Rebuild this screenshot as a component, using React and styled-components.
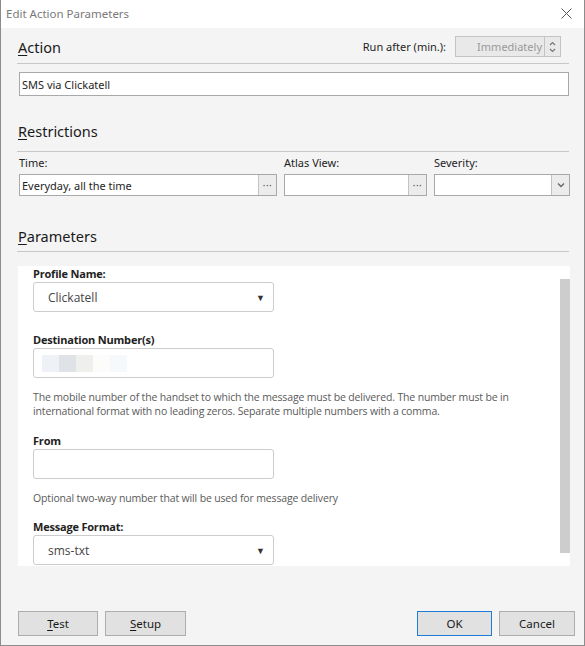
import styled, { createGlobalStyle } from 'styled-components'

const Global = createGlobalStyle`
  html, body { margin: 0; padding: 0; background: #fff; }
  * { box-sizing: border-box; }
`

const Dialog = styled.div`
  width: 585px;
  height: 646px;
  display: flex;
  flex-direction: column;
  background: #f4f4f4;
  border: 1px solid #8c8c8c;
  border-top: none;
  font-family: "Noto Sans", "Open Sans", sans-serif;
  color: #1e1e1e;
`

const TitleBar = styled.div`
  height: 28px;
  flex: none;
  display: flex;
  align-items: center;
  justify-content: space-between;
  padding: 0 8px 2px 5px;
  background: #fff;
  font-size: 11.5px;
  color: #7a7a7a;
`

const CloseBtn = styled.span`
  display: flex;
  width: 20px;
  justify-content: center;
`

const Body = styled.div`
  flex: 1;
  display: flex;
  flex-direction: column;
  padding: 0 15px 0 16px;
`

const SectionHead = styled.div`
  display: flex;
  align-items: center;
  justify-content: space-between;
  height: ${p => p.$h}px;
  margin-top: ${p => p.$top}px;
  border-bottom: 1px solid #c8c8c8;
  padding: 0 8px ${p => p.$pb}px 1px;
`

const SectionTitle = styled.div`
  font-size: 14.5px;
  color: #1a1a1a;
  u { text-decoration-thickness: 1px; text-underline-offset: 2px; }
`

const RunAfter = styled.div`
  display: flex;
  align-items: center;
  gap: 9px;
  font-size: 11px;
`

const Spin = styled.div`
  display: flex;
  width: 106px;
  height: 21px;
  border: 1px solid #c3c3c3;
  background: #e9e9e9;
`

const SpinValue = styled.div`
  flex: 1;
  display: flex;
  align-items: center;
  justify-content: flex-end;
  padding-right: 2px;
  font-size: 11px;
  color: #9a9a9a;
`

const SpinArrows = styled.div`
  width: 16px;
  border-left: 1px solid #c3c3c3;
  display: flex;
  align-items: center;
  justify-content: center;
`

const TextBox = styled.div`
  height: ${p => p.$h || 24}px;
  margin: ${p => p.$m || '0'};
  border: 1px solid #a9a9a9;
  background: #fff;
  display: flex;
  align-items: center;
  font-size: 11px;
`

const BoxText = styled.span`
  flex: 1;
  padding-left: 2px;
  white-space: nowrap;
`

const SideBtn = styled.div`
  width: 18px;
  align-self: stretch;
  border-left: 1px solid #c3c3c3;
  background: #ececec;
  display: flex;
  align-items: center;
  justify-content: center;
  font-size: 10px;
  color: #555;
  letter-spacing: 0.5px;
`

const FilterRow = styled.div`
  display: grid;
  grid-template-columns: 258px 143px 136px;
  column-gap: 7px;
  margin: 2px 0 0 2px;
`

const FilterLabel = styled.div`
  font-size: 11px;
  height: 17px;
  display: flex;
  align-items: center;
  margin-bottom: 3px;
`

const Panel = styled.div`
  margin: 14px 0 0 1px;
  height: 300px;
  width: 552px;
  background: #fff;
  display: flex;
`

const PanelForm = styled.div`
  flex: 1;
  padding: 0 0 0 15px;
  font-family: "Open Sans", "Noto Sans", sans-serif;
`

const ScrollTrack = styled.div`
  width: 10px;
  padding-top: 13px;
  padding-bottom: 13px;
  display: flex;
`

const ScrollThumb = styled.div`
  flex: 1;
  background: #cdcdcd;
`

const FieldLabel = styled.div`
  font-size: 11px;
  font-weight: 700;
  color: #222;
  margin-top: ${p => p.$top || 0}px;
  height: 15px;
  line-height: 15px;
  letter-spacing: -0.2px;
`

const WebInput = styled.div`
  width: 241px;
  height: 30px;
  margin-top: 1px;
  border: 1px solid #cccccc;
  border-radius: 3px;
  display: flex;
  align-items: center;
  padding: 0 8px 0 14px;
  font-size: 12px;
  color: #444;
`

const Caret = styled.span`
  margin-left: auto;
  font-size: 9px;
  color: #333;
`

const Blur = styled.div`
  display: flex;
  margin-left: -6px;
  height: 17px;
  span { width: 17px; height: 17px; filter: blur(0.4px); }
`

const Help = styled.div`
  margin-top: 12px;
  font-size: 10.5px;
  line-height: 14px;
  color: #5a5a5a;
  letter-spacing: -0.15px;
`

const Footer = styled.div`
  margin: auto -6px 9px 0;
  display: flex;
  gap: 7px;
  padding-left: 1px;
`

const Button = styled.div`
  width: ${p => p.$w || 80}px;
  height: 25px;
  border: 1px solid ${p => (p.$default ? '#1f7bd6' : '#adadad')};
  background: #e1e1e1;
  display: flex;
  align-items: center;
  justify-content: center;
  font-size: 11.5px;
  color: #1a1a1a;
  margin-left: ${p => (p.$push ? 'auto' : '0')};
  u { text-underline-offset: 2px; }
`

export default function App() {
  return (
    <>
      <Global />
      <Dialog>
        <TitleBar>
          <span>Edit Action Parameters</span>
          <CloseBtn>
            <svg width="11" height="11" viewBox="0 0 11 11">
              <path d="M0.5 0.5 L10.5 10.5 M10.5 0.5 L0.5 10.5" stroke="#555" strokeWidth="1" />
            </svg>
          </CloseBtn>
        </TitleBar>
        <Body>
          <SectionHead $top={6} $h={30} $pb={4}>
            <SectionTitle><u>A</u>ction</SectionTitle>
            <RunAfter>
              <span>Run after (min.):</span>
              <Spin>
                <SpinValue>Immediately</SpinValue>
                <SpinArrows>
                  <svg width="7" height="12" viewBox="0 0 7 12">
                    <path d="M1 4 L3.5 1.5 L6 4 M1 8 L3.5 10.5 L6 8" stroke="#777" strokeWidth="1.2" fill="none" />
                  </svg>
                </SpinArrows>
              </Spin>
            </RunAfter>
          </SectionHead>
          <TextBox $m="8px 0 0 2px">
            <BoxText>SMS via Clickatell</BoxText>
          </TextBox>

          <SectionHead $top={23} $h={33} $pb={8}>
            <SectionTitle><u>R</u>estrictions</SectionTitle>
          </SectionHead>
          <FilterRow>
            <div>
              <FilterLabel>Time:</FilterLabel>
              <TextBox $h={22}>
                <BoxText>Everyday, all the time</BoxText>
                <SideBtn>···</SideBtn>
              </TextBox>
            </div>
            <div>
              <FilterLabel>Atlas View:</FilterLabel>
              <TextBox $h={22}>
                <BoxText />
                <SideBtn>···</SideBtn>
              </TextBox>
            </div>
            <div>
              <FilterLabel>Severity:</FilterLabel>
              <TextBox $h={22}>
                <BoxText />
                <SideBtn>
                  <svg width="8" height="6" viewBox="0 0 8 6">
                    <path d="M1 1.5 L4 4.5 L7 1.5" stroke="#666" strokeWidth="1.4" fill="none" />
                  </svg>
                </SideBtn>
              </TextBox>
            </div>
          </FilterRow>

          <SectionHead $top={26} $h={30} $pb={1}>
            <SectionTitle><u>P</u>arameters</SectionTitle>
          </SectionHead>

          <Panel>
            <PanelForm>
              <FieldLabel $top={0}>Profile Name:</FieldLabel>
              <WebInput>
                Clickatell
                <Caret>▼</Caret>
              </WebInput>
              <FieldLabel $top={20}>Destination Number(s)</FieldLabel>
              <WebInput>
                <Blur>
                  <span style={{ background: '#eef2f6' }} />
                  <span style={{ background: '#dfe3e7' }} />
                  <span style={{ background: '#efefed' }} />
                  <span style={{ background: '#fcfcfb' }} />
                  <span style={{ background: '#f6f9fc' }} />
                </Blur>
              </WebInput>
              <Help>
                The mobile number of the handset to which the message must be delivered. The number must be in
                international format with no leading zeros. Separate multiple numbers with a comma.
              </Help>
              <FieldLabel $top={15}>From</FieldLabel>
              <WebInput />
              <Help>Optional two-way number that will be used for message delivery</Help>
              <FieldLabel $top={14}>Message Format:</FieldLabel>
              <WebInput>
                sms-txt
                <Caret>▼</Caret>
              </WebInput>
            </PanelForm>
            <ScrollTrack>
              <ScrollThumb />
            </ScrollTrack>
          </Panel>

          <Footer>
            <Button $w={80}><span><u>T</u>est</span></Button>
            <Button $w={81}><span><u>S</u>etup</span></Button>
            <Button $w={75} $push $default>OK</Button>
            <Button $w={76}>Cancel</Button>
          </Footer>
        </Body>
      </Dialog>
    </>
  )
}
